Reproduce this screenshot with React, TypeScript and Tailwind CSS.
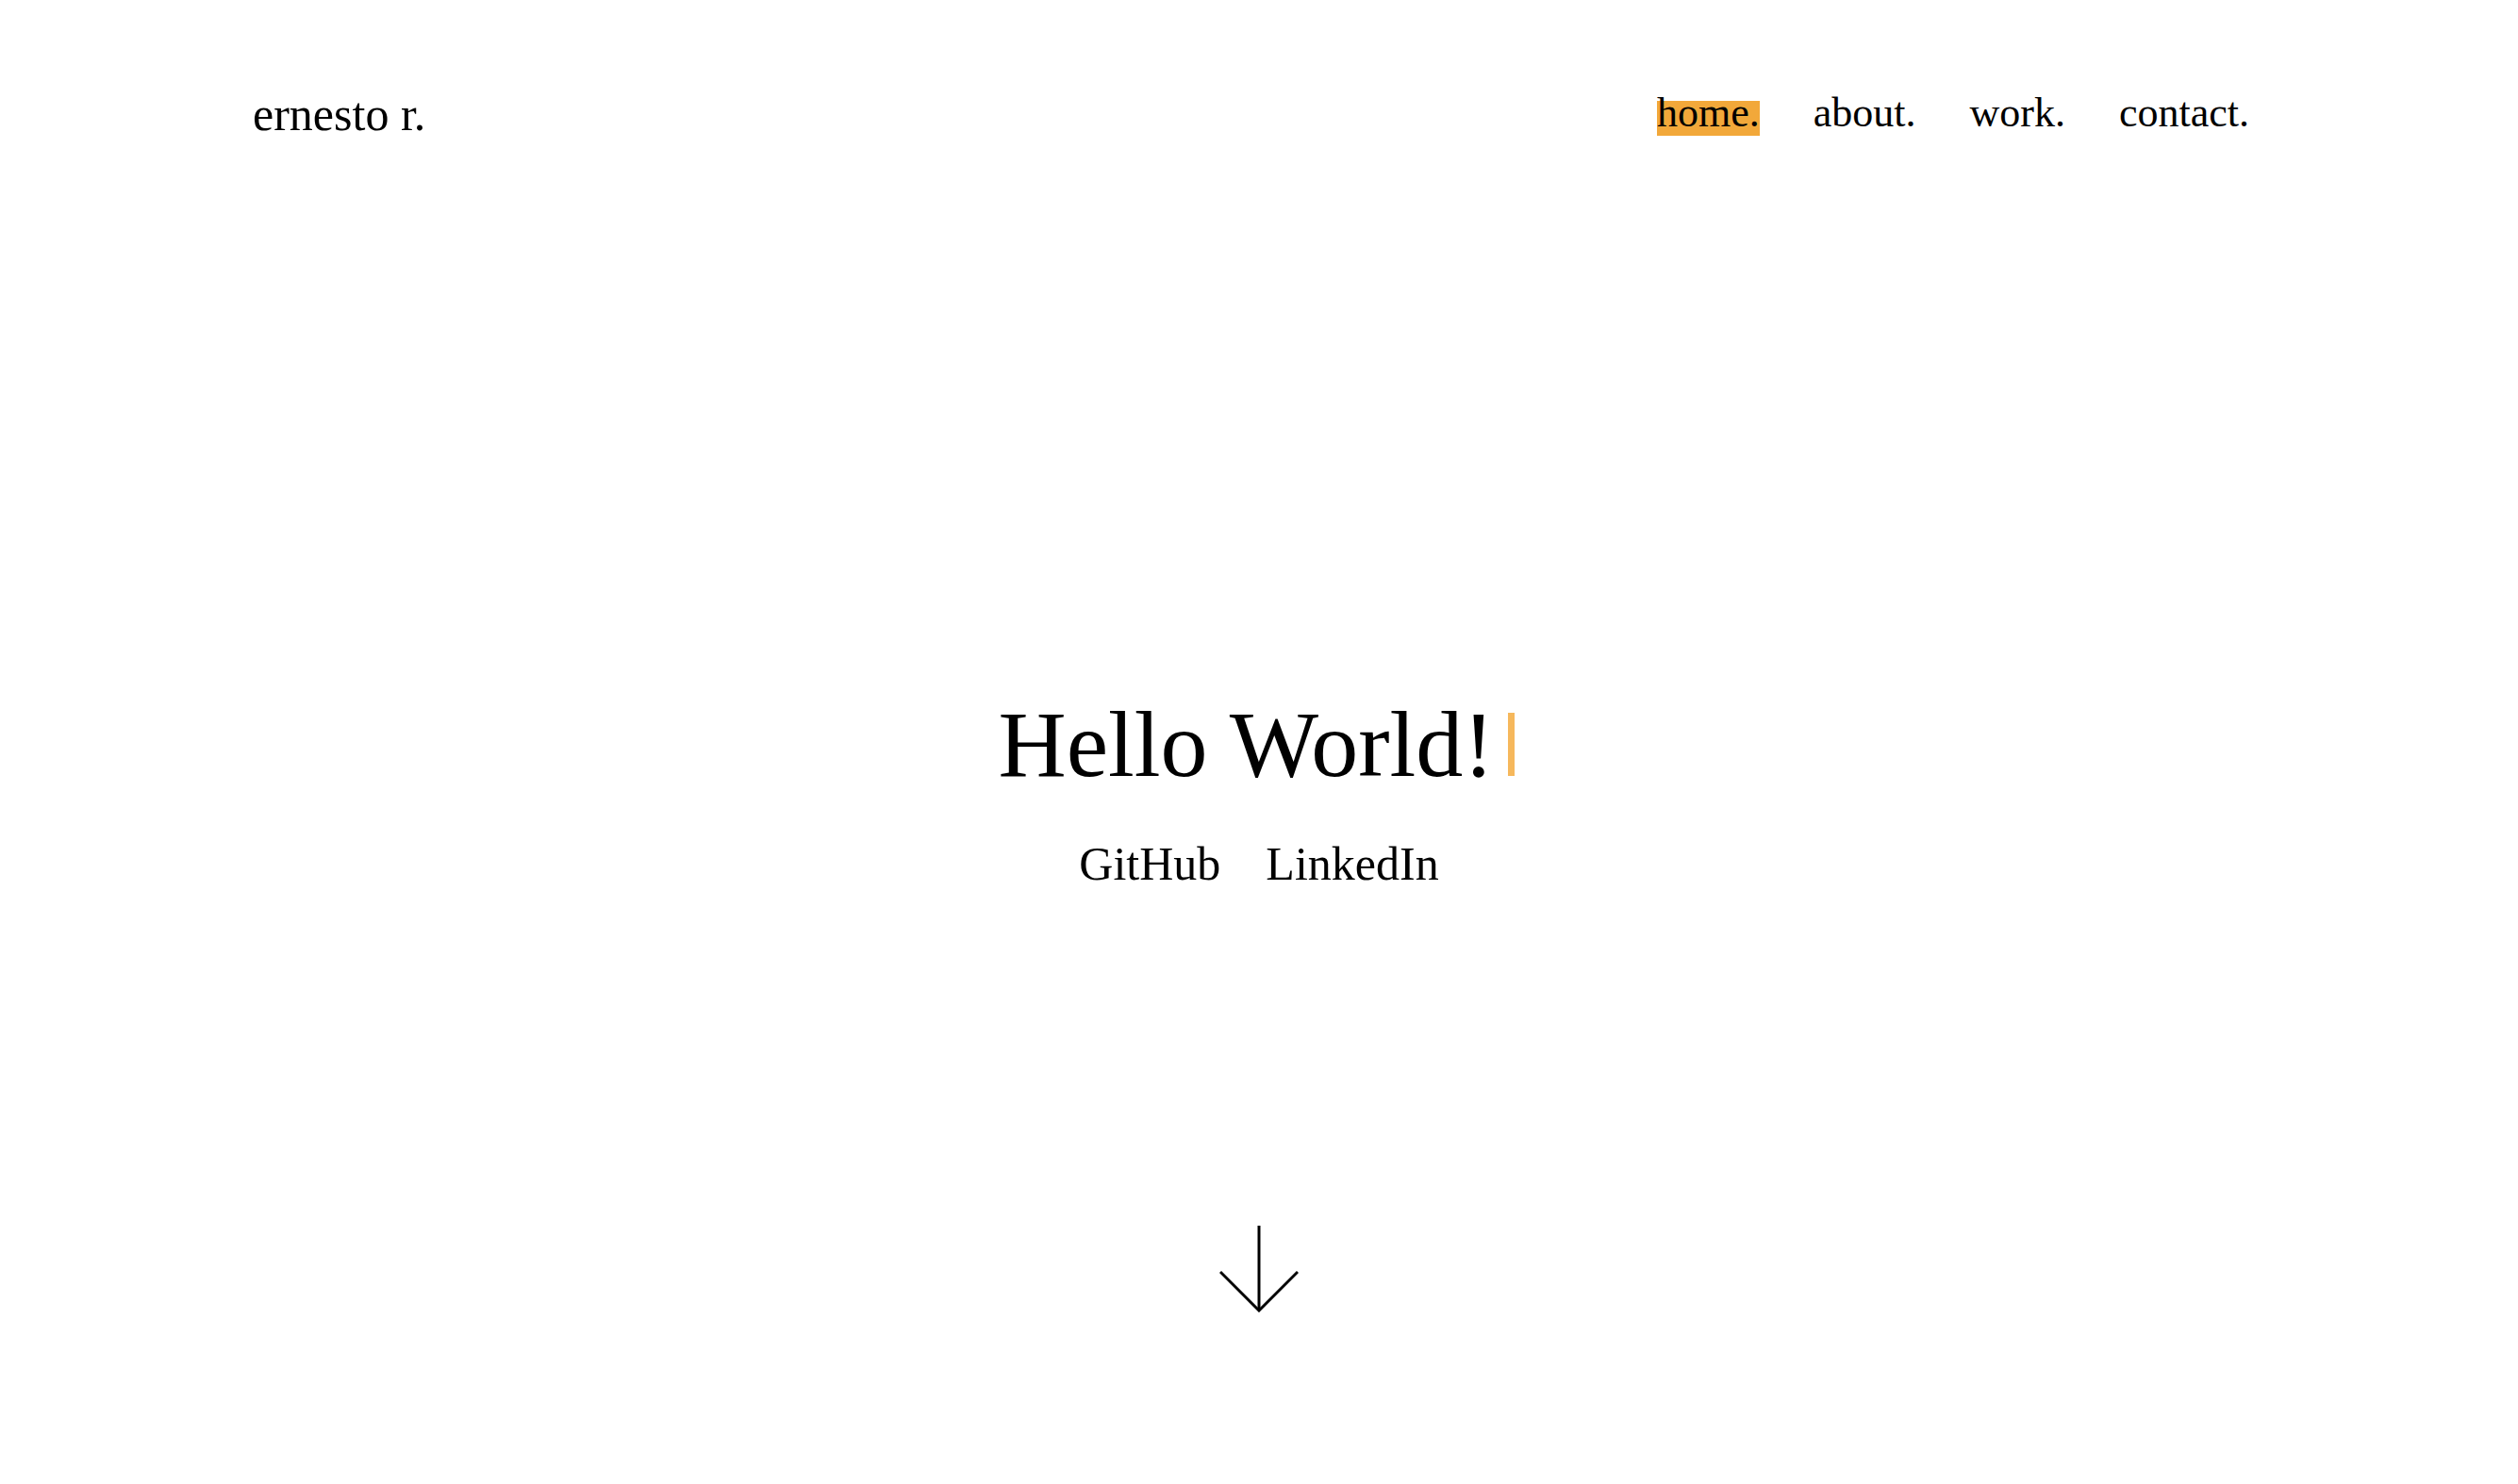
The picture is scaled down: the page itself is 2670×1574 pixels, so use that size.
const navItems = ["home.", "about.", "work.", "contact."];

function ArrowDown() {
  return (
    <svg
      width="84"
      height="92"
      viewBox="0 0 84 92"
      fill="none"
      aria-hidden="true"
      className="text-black"
    >
      <path d="M42 0V90" stroke="currentColor" strokeWidth="3" />
      <path d="M1 49L42 90L83 49" stroke="currentColor" strokeWidth="3" />
    </svg>
  );
}

export default function App() {
  return (
    <div className="min-h-screen bg-white font-['Liberation_Serif',serif] text-black">
      <header className="flex items-start justify-between pl-[268px] pr-[285px] pt-[96px]">
        <a href="#" className="text-[50px] leading-none">
          ernesto r.
        </a>
        <nav className="mt-[2px] flex gap-[57px] text-[44px] leading-none">
          {navItems.map((item, i) => (
            <a
              key={item}
              href="#"
              className={
                i === 0
                  ? "inline-block pb-[2px] bg-[linear-gradient(to_bottom,transparent_9px,#f2a83a_9px)]"
                  : "inline-block"
              }
            >
              {item}
            </a>
          ))}
        </nav>
      </header>

      <main className="flex flex-col items-center pt-[594px]">
        <h1 className="-translate-x-[3px] text-[100px] leading-none">
          Hello World!
          <span className="ml-[14px] inline-block h-[67px] w-[7px] bg-[#f6b85c]" />
        </h1>
        <div className="mt-[51px] flex gap-[48px] text-[50px] leading-none">
          <a href="#">GitHub</a>
          <a href="#">LinkedIn</a>
        </div>
        <div className="mt-[359px] pb-[60px]">
          <ArrowDown />
        </div>
      </main>
    </div>
  );
}
